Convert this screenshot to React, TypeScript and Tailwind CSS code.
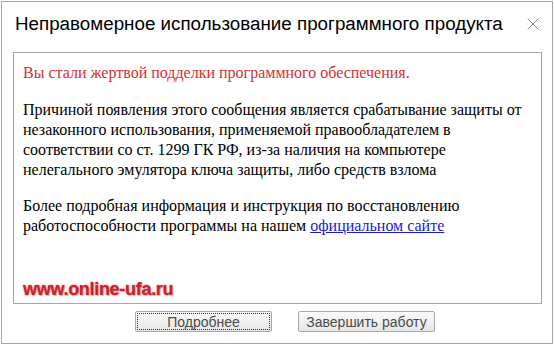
import { X } from 'lucide-react'

const sans = { fontFamily: '"Liberation Sans", Arial, sans-serif' }
const serif = { fontFamily: '"Liberation Serif", "Times New Roman", serif' }

function DialogButton({ label, focused = false }: { label: string; focused?: boolean }) {
    return (
        <button
            className="w-[137px] h-[21px] rounded-[2px] border border-[#a8a8a8] bg-gradient-to-b from-[#fafafa] to-[#e6e6e6] p-[1px] text-[14px] leading-none text-[#4a4a4a]"
            style={sans}
        >
            <span
                className={`flex h-full w-full items-center justify-center ${focused ? 'border border-dotted border-[#333]' : ''}`}
            >
                {label}
            </span>
        </button>
    )
}

export default function App() {
    return (
        <div className="w-[554px] h-[345px] bg-white pl-[1px] pt-[1px]">
            <div className="flex h-[343px] w-[552px] flex-col border border-[#a6a6a6] bg-white">
                <div className="flex h-[41px] shrink-0 items-center justify-between pl-[13px] pr-[9px] pt-[3px]">
                    <span className="text-[18.8px] leading-none text-black" style={sans}>
                        Неправомерное использование программного продукта
                    </span>
                    <X className="h-[20px] w-[20px] shrink-0 text-[#6b6b6b]" strokeWidth={1} />
                </div>

                <div className="ml-[11px] mt-[9px] flex h-[252px] w-[529px] flex-col border border-[#a6a6a6] px-[9px] pb-[5px] pt-[10px]" style={serif}>
                    <p className="text-[16px] leading-[20px] text-[#d03333]">
                        Вы стали жертвой подделки программного обеспечения.
                    </p>
                    <p className="mt-[17px] text-[16px] leading-[20px] text-black">
                        Причиной появления этого сообщения является срабатывание защиты от незаконного использования, применяемой правообладателем в соответствии со ст. 1299 ГК РФ, из-за наличия на компьютере нелегального эмулятора ключа защиты, либо средств взлома
                    </p>
                    <p className="mt-[16px] text-[16px] leading-[20px] text-black">
                        Более подробная информация и инструкция по восстановлению работоспособности программы на нашем{' '}
                        <a href="#" className="text-[#1a1ad0] underline">официальном сайте</a>
                    </p>
                    <div
                        className="mt-auto text-[18px] font-bold leading-none tracking-[-0.3px] text-[#c8222c] [text-shadow:0_0_2px_rgba(200,40,50,0.6),1px_1px_1px_rgba(200,60,70,0.35)]"
                        style={sans}
                    >
                        www.online-ufa.ru
                    </div>
                </div>

                <div className="mt-[7px] flex gap-[26px] pl-[133px]">
                    <DialogButton label="Подробнее" focused />
                    <DialogButton label="Завершить работу" />
                </div>
            </div>
        </div>
    )
}
